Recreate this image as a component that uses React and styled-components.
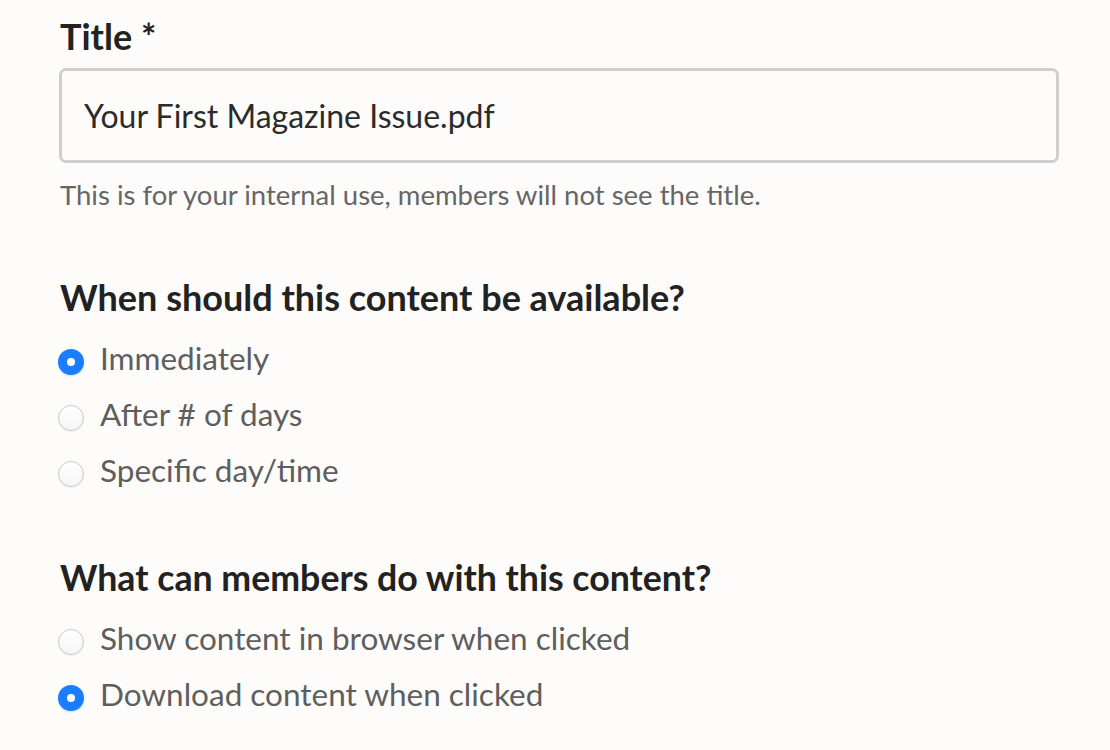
import React from "react";
import styled, { createGlobalStyle } from "styled-components";

const Global = createGlobalStyle`
  html, body { margin: 0; padding: 0; background: #fdfcfb; }
  body { font-family: Lato, "Noto Sans", sans-serif; color: #222; }
`;

const Page = styled.div`
  padding: 14px 52px 0 60px;
  display: flex;
  flex-direction: column;
`;

const Field = styled.div`
  display: flex;
  flex-direction: column;
  margin-bottom: ${(p) => p.$gap || 0}px;
`;

const Label = styled.div`
  font-size: ${(p) => p.$size || 36}px;
  font-weight: 700;
  line-height: 44px;
  color: #222;
  margin-bottom: ${(p) => p.$mb || 0}px;
`;

const Input = styled.input`
  box-sizing: border-box;
  width: 1000px;
  margin-left: -1px;
  height: 95px;
  border: 3px solid #cfcfcf;
  border-radius: 7px;
  background: #fdfcfb;
  padding: 0 22px;
  font-family: Lato, sans-serif;
  font-size: 32px;
  color: #2b2b2b;
  outline: none;
`;

const Help = styled.div`
  font-size: 27.5px;
  line-height: 36px;
  color: #666;
  margin-top: 14px;
`;

const Options = styled.div`
  display: flex;
  flex-direction: column;
`;

const Option = styled.label`
  display: flex;
  align-items: center;
  gap: 16px;
  height: 56px;
  font-size: 31.5px;
  color: #5e5e5e;
  cursor: pointer;
`;

const Radio = styled.span`
  box-sizing: border-box;
  width: 26px;
  height: 26px;
  margin-top: 8px;
  border-radius: 50%;
  margin-left: -2px;
  flex: none;
  ${(p) =>
    p.$checked
      ? `background: #fff; border: 9px solid #1a7dff; box-shadow: 0 1px 2px rgba(26,125,255,0.25);`
      : `background: linear-gradient(#fff, #f5f5f5); border: 1.5px solid #c9c9c9; box-shadow: 0 1px 1px rgba(0,0,0,0.06);`}
`;

function RadioGroup({ items, value }) {
  return (
    <Options>
      {items.map((it) => (
        <Option key={it}>
          <Radio $checked={it === value} />
          {it}
        </Option>
      ))}
    </Options>
  );
}

export default function App() {
  return (
    <>
      <Global />
      <Page>
        <Field $gap={62}>
          <Label $mb={10}>Title *</Label>
          <Input defaultValue="Your First Magazine Issue.pdf" />
          <Help>This is for your internal use, members will not see the title.</Help>
        </Field>
        <Field $gap={58}>
          <Label $mb={11}>When should this content be available?</Label>
          <RadioGroup
            items={["Immediately", "After # of days", "Specific day/time"]}
            value="Immediately"
          />
        </Field>
        <Field>
          <Label $mb={10} $size={35.7}>What can members do with this content?</Label>
          <RadioGroup
            items={["Show content in browser when clicked", "Download content when clicked"]}
            value="Download content when clicked"
          />
        </Field>
      </Page>
    </>
  );
}
